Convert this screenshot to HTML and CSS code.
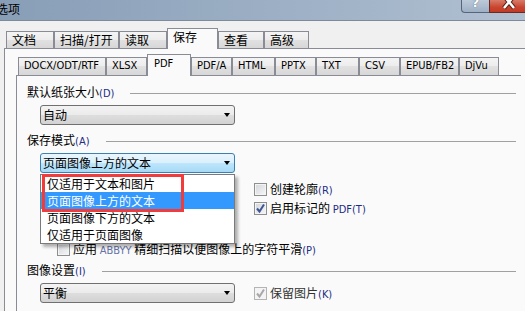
FILE: index.html
```html
<!DOCTYPE html>
<html>
  <head>
    <meta charset="utf-8" />
    <link rel="stylesheet" href="styles.css">
    <title>选项</title>
  </head>
  <body>
    <!-- title bar, the top of the window is cut off -->
    <div class="titlebar">
      <span class="caption">选项</span>
      <div class="captionButtons">
        <div class="helpButton"><span>?</span></div>
        <div class="closeButton">
          <svg width="14" height="10" viewBox="0 0 14 10">
            <path d="M2 -4 L12 8 M12 -4 L2 8" stroke="#5a2218" stroke-width="4.5" />
            <path d="M2 -4 L12 8 M12 -4 L2 8" stroke="#ffffff" stroke-width="2.5" />
          </svg>
        </div>
      </div>
    </div>

    <div class="window">
      <div class="tabs">
        <div class="tab w48">文档</div>
        <div class="tab w65">扫描/打开</div>
        <div class="tab w48">读取</div>
        <div class="tab active w51">保存</div>
        <div class="tab w46">查看</div>
        <div class="tab w45">高级</div>
      </div>

      <div class="page">
        <div class="subtabs">
          <div class="subtab w88">DOCX/ODT/RTF</div>
          <div class="subtab w41">XLSX</div>
          <div class="subtab active w44">PDF</div>
          <div class="subtab w41">PDF/A</div>
          <div class="subtab w43">HTML</div>
          <div class="subtab w41">PPTX</div>
          <div class="subtab w43">TXT</div>
          <div class="subtab w41">CSV</div>
          <div class="subtab w59">EPUB/FB2</div>
          <div class="subtab w40">DjVu</div>
        </div>

        <div class="subpage">
          <div class="groupHead">
            <span>默认纸张大小<span class="key">(D)</span></span>
            <div class="rule"></div>
          </div>
          <div class="combo">
            <span>自动</span>
            <span class="arrow"></span>
          </div>

          <div class="groupHead second">
            <span>保存模式<span class="key">(A)</span></span>
            <div class="rule"></div>
          </div>
          <div class="comboWrap">
            <div class="combo focused">
              <span>页面图像上方的文本</span>
              <span class="arrow"></span>
            </div>
            <!-- the open list of the combo box -->
            <div class="dropdownList">
              <div class="option">仅适用于文本和图片</div>
              <div class="option selected">页面图像上方的文本</div>
              <div class="option">页面图像下方的文本</div>
              <div class="option">仅适用于页面图像</div>
              <div class="markBox"></div>
            </div>
          </div>

          <div class="checks">
            <div class="checkRow">
              <span class="box"></span>
              <span>创建轮廓<span class="key">(R)</span></span>
            </div>
            <div class="checkRow">
              <span class="box">
                <svg width="11" height="11" viewBox="0 0 11 11"><path d="M2 5.5 L4.5 8.5 L9 1.5" fill="none" stroke="#3d5593" stroke-width="2" /></svg>
              </span>
              <span>启用标记的 <span class="key">PDF(T)</span></span>
            </div>
          </div>

          <div class="checkRow smooth">
            <span class="box"></span>
            <span>应用 <span class="latin">ABBYY</span> 精细扫描以便图像上的字符平滑<span class="key">(P)</span></span>
          </div>

          <div class="groupHead">
            <span>图像设置<span class="key">(I)</span></span>
            <div class="rule"></div>
          </div>
          <div class="bottomRow">
            <div class="combo">
              <span>平衡</span>
              <span class="arrow"></span>
            </div>
            <div class="checkRow disabled">
              <span class="box">
                <svg width="11" height="11" viewBox="0 0 11 11"><path d="M2 5.5 L4.5 8.5 L9 1.5" fill="none" stroke="#a8a8a8" stroke-width="2" /></svg>
              </span>
              <span>保留图片<span class="key">(K)</span></span>
            </div>
          </div>
        </div>
      </div>
    </div>
  </body>
</html>
```

FILE: styles.css
```css
body {
  margin: 0;
  width: 525px;
  height: 311px;
  overflow: hidden;
  background-color: #f0f0f0;
  font-family: "Noto Sans CJK SC", sans-serif;
  font-size: 12px;
  color: #000;
}

/* title bar */
.titlebar {
  height: 20px;
  display: flex;
  align-items: flex-start;
  background: linear-gradient(to right, #889eb7, #a3b5c9 70%, #b2c1d2);
  border-bottom: 1px solid #7d8a9b;
}

.caption {
  margin-left: -4px;
  line-height: 17px;
}

.captionButtons {
  margin-left: auto;
  display: flex;
}

.helpButton {
  box-sizing: border-box;
  width: 28px;
  height: 13px;
  border: 1px solid #55657b;
  border-top: none;
  border-right: none;
  border-radius: 0 0 0 4px;
  background: linear-gradient(#bccada, #9fb0c4);
  display: flex;
  justify-content: center;
  overflow: hidden;
}

.helpButton span {
  font-family: "DejaVu Sans", sans-serif;
  font-weight: bold;
  font-size: 13px;
  line-height: 1;
  margin-top: -4px;
  color: #fff;
  text-shadow: 0 0 1px #3a4454;
}

.closeButton {
  box-sizing: border-box;
  width: 36px;
  height: 13px;
  border-left: 1px solid #6b2b20;
  border-bottom: 1px solid #6b2b20;
  background: linear-gradient(#d77b69, #c9452f 60%, #c23a25);
  display: flex;
  justify-content: center;
  padding-left: 3px;
}

/* main tabs */
.window {
  padding-top: 7px;
}

.tabs {
  display: flex;
  align-items: flex-end;
  height: 20px;
  padding-left: 6px;
}

.tab {
  box-sizing: border-box;
  height: 17px;
  border: 1px solid #898c95;
  border-bottom: none;
  padding-left: 5px;
  line-height: 15px;
  background: linear-gradient(#f4f4f4, #ececec 50%, #e1e1e1 50%, #d7d7d7);
  white-space: nowrap;
}

.tab.active {
  height: 21px;
  margin-bottom: -1px;
  position: relative;
  z-index: 1;
  background: #fafafa;
  line-height: 16px;
}

.page {
  margin-left: 4px;
  height: 257px;
  overflow: hidden;
  border-top: 1px solid #898c95;
  border-left: 1px solid #898c95;
  background-color: #fafafa;
  padding: 5px 0 0 11px;
}

/* format tabs */
.subtabs {
  display: flex;
  align-items: flex-end;
  height: 21px;
  padding-left: 2px;
}

.subtab {
  box-sizing: border-box;
  height: 18px;
  border: 1px solid #898c95;
  border-bottom: none;
  padding-left: 5px;
  font-family: "DejaVu Sans Condensed", "DejaVu Sans", sans-serif;
  font-size: 11px;
  line-height: 16px;
  background: linear-gradient(#f4f4f4, #ececec 50%, #e1e1e1 50%, #d7d7d7);
  white-space: nowrap;
}

.subtab.active {
  height: 22px;
  margin-bottom: -1px;
  position: relative;
  z-index: 1;
  padding-left: 6px;
  background: #fafafa;
  line-height: 18px;
}

.w40 { width: 40px; }
.w41 { width: 41px; }
.w43 { width: 43px; }
.w44 { width: 44px; }
.w45 { width: 45px; }
.w46 { width: 46px; }
.w48 { width: 48px; }
.w51 { width: 51px; }
.w59 { width: 59px; }
.w65 { width: 65px; }
.w88 { width: 88px; }

.subpage {
  width: 499px;
  height: 226px;
  border-top: 1px solid #898c95;
  border-left: 1px solid #898c95;
  padding: 9px 5px 0 0;
}

/* group headers with a rule */
.groupHead {
  display: flex;
  align-items: center;
  height: 16px;
  margin: 4px 0 0 10px;
  line-height: 16px;
}

.subpage > .groupHead:first-child {
  margin-top: 0;
}

.groupHead.second {
  margin-top: 8px;
}

.rule {
  flex: 1;
  height: 1px;
  margin-left: 16px;
  background-color: #a0a0a0;
}

.key {
  font-family: "DejaVu Sans Condensed", "DejaVu Sans", sans-serif;
  font-size: 11px;
  color: #1d2d84;
}

.latin {
  font-family: "DejaVu Sans Condensed", "DejaVu Sans", sans-serif;
  font-size: 11px;
  color: #6573a6;
}

/* combo boxes */
.combo {
  box-sizing: border-box;
  width: 195px;
  height: 20px;
  margin: 4px 0 0 23px;
  padding: 0 4px 0 2px;
  display: flex;
  align-items: center;
  justify-content: space-between;
  border: 1px solid #707070;
  border-radius: 3px;
  background: linear-gradient(#f3f3f3, #ebebeb 50%, #dedede 50%, #d2d2d2);
  line-height: 18px;
}

.combo.focused {
  border-color: #3c7fb1;
  background: linear-gradient(#eaf6fd, #d9f0fc 50%, #bee6fd 50%, #a7d9f5);
}

.arrow {
  width: 0;
  height: 0;
  border-top: 4px solid #000;
  border-left: 3.5px solid transparent;
  border-right: 3.5px solid transparent;
}

.comboWrap {
  position: relative;
}

.dropdownList {
  position: absolute;
  top: 21px;
  left: 23px;
  z-index: 2;
  box-sizing: border-box;
  width: 195px;
  border: 1px solid #7a7a7a;
  background-color: #fff;
  box-shadow: 3px 3px 3px rgba(0, 0, 0, 0.3);
}

.option {
  height: 17px;
  padding-left: 6px;
  line-height: 17px;
}

.option.selected {
  background-color: #3399ff;
  color: #fff;
}

/* the red annotation frame */
.markBox {
  position: absolute;
  top: -1px;
  left: 1px;
  box-sizing: border-box;
  width: 142px;
  height: 38px;
  border: 3px solid #f23b3b;
}

/* check boxes */
.checks {
  margin: 7px 0 0 237px;
}

.checkRow {
  display: flex;
  align-items: center;
  gap: 3px;
  height: 19px;
  line-height: 19px;
  white-space: nowrap;
}

.checkRow.smooth {
  margin: 22px 0 0 40px;
}

.box {
  box-sizing: border-box;
  width: 13px;
  height: 13px;
  border: 1px solid #8e8f8f;
  background: linear-gradient(135deg, #d2d5da, #f7f7f7);
  box-shadow: inset 0 0 0 1px #f4f4f4;
  display: flex;
  align-items: center;
  justify-content: center;
}

.disabled .box {
  border-color: #b4b4b4;
  background: #f4f4f4;
}

.disabled {
  color: #333;
}

.bottomRow {
  display: flex;
  align-items: center;
  margin-top: 4px;
}

.bottomRow .combo {
  margin-top: 0;
}

.bottomRow .checkRow {
  margin-left: 19px;
}
```
